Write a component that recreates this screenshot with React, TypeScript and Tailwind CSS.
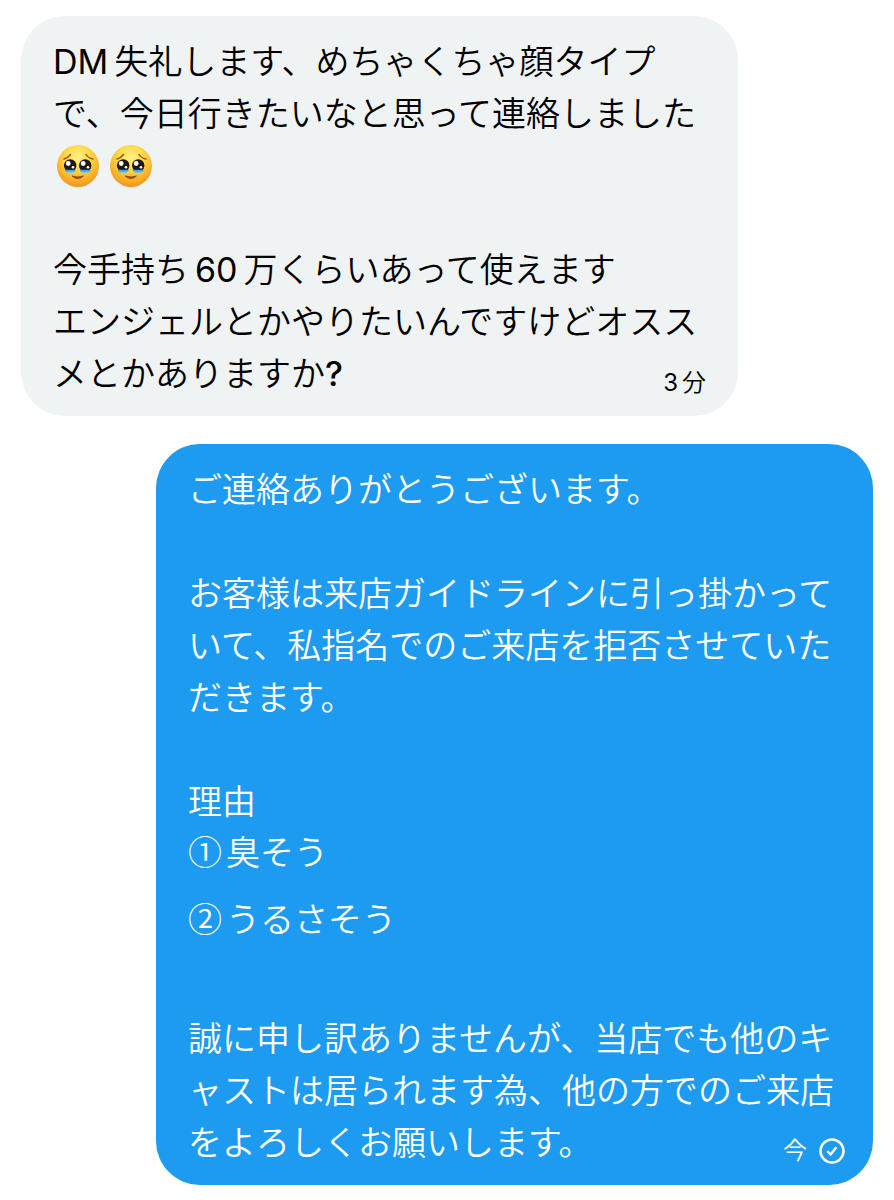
import type { ReactNode } from "react";
import clsx from "clsx";

function TearyFace() {
  return (
    <svg viewBox="0 0 42 42" className="size-[42px]" role="img" aria-label="🥹">
      <defs>
        <radialGradient id="face" cx="50%" cy="30%" r="70%">
          <stop offset="0" stopColor="#fff08a" />
          <stop offset="0.4" stopColor="#fedc4c" />
          <stop offset="0.78" stopColor="#fcae25" />
          <stop offset="1" stopColor="#ec9526" />
        </radialGradient>
        <linearGradient id="tear" x1="0" y1="0" x2="0" y2="1">
          <stop offset="0" stopColor="#2d8fd0" />
          <stop offset="1" stopColor="#74d4fb" />
        </linearGradient>
      </defs>
      <circle cx="21" cy="21" r="21" fill="url(#face)" />
      <g fill="none" stroke="#9a5a14" strokeWidth="1.5" strokeLinecap="round">
        <path d="M7 14Q11 13 13.500 9.500" />
        <path d="M36 14Q31 13 29 9.500" />
      </g>
      <circle cx="13.200" cy="20.500" r="6.200" fill="#201717" />
      <circle cx="28.200" cy="20.500" r="6.200" fill="#201717" />
      <path d="M7.500 24.500Q13 25 19 24.500Q18 28 13.200 28Q8.500 28 7.500 24.500Z" fill="url(#tear)" />
      <path d="M22.500 24.500Q28.500 25 34 24.500Q33 28 28.200 28Q23.500 28 22.500 24.500Z" fill="url(#tear)" />
      <circle cx="11.200" cy="18.500" r="2.400" fill="#fff" />
      <circle cx="26.200" cy="18.500" r="2.400" fill="#fff" />
      <circle cx="16" cy="22.200" r="1.300" fill="#fff" />
      <circle cx="31" cy="22.200" r="1.300" fill="#fff" />
      <path d="M15 31Q21 36 26.500 31Q21 33 15 31Z" fill="#9a4f14" stroke="#9a4f14" strokeLinejoin="round" />
    </svg>
  );
}

function SentIcon() {
  return (
    <svg viewBox="0 0 26 26" className="size-[26px]" fill="none" stroke="currentColor" strokeWidth="2.5" role="img" aria-label="送信済み">
      <circle cx="13" cy="13" r="11.500" />
      <path d="M8.300 13.200L11.600 16.500L17.400 9.200" />
    </svg>
  );
}

interface BubbleProps {
  mine?: boolean;
  time: ReactNode;
  children: ReactNode;
}

function Bubble({ mine, time, children }: BubbleProps) {
  return (
    <article
      className={clsx(
        "relative rounded-[44px] px-8 pt-5 pb-4 [line-break:loose]",
        mine ? "ml-[135px] bg-[#1d9bf0] text-white" : "mr-[135px] bg-[#eff3f4] text-black"
      )}
    >
      {children}
      <footer
        className={clsx(
          "absolute bottom-[21px] flex items-center text-2xl leading-6",
          mine ? "right-7 gap-3" : "right-8"
        )}
      >
        {time}
      </footer>
    </article>
  );
}

export default function App() {
  return (
    <main
      lang="ja"
      className="flex flex-col gap-7 bg-white px-[21px] py-4 font-['Inter','Noto_Sans_CJK_JP',sans-serif] text-[34px] leading-[52px] font-[350]"
    >
      <Bubble
        time={
          <time>
            <span className="mr-1 font-normal">3</span>分
          </time>
        }
      >
        <p>
          <span className="mr-1.5 font-normal">DM</span>
          失礼します、めちゃくちゃ顔タイプで、今日行きたいなと思って連絡しました
        </p>
        <div className="flex h-[52px] items-center gap-[11px] px-1">
          <TearyFace />
          <TearyFace />
        </div>
        <p className="mt-[52px]">
          今手持ち<span className="mx-1.5 font-normal">60</span>万くらいあって使えます
        </p>
        <p>
          エンジェルとかやりたいんですけどオススメとかありますか<span className="font-medium">?</span>
        </p>
      </Bubble>

      <Bubble
        mine
        time={
          <>
            <time>今</time>
            <SentIcon />
          </>
        }
      >
        <p>ご連絡ありがとうございます。</p>
        <p className="mt-[52px]">
          お客様は来店ガイドラインに引っ掛かっていて、私指名でのご来店を拒否させていただきます。
        </p>
        <p className="mt-[52px]">理由</p>
        {/* The CJK face goes first here so the circled numbers stay one em wide */}
        <ul className="-mt-[3px] flex flex-col gap-[15px] font-['Noto_Sans_CJK_JP',sans-serif]">
          <li>
            <span className="mr-1">①</span>臭そう
          </li>
          <li>
            <span className="mr-1">②</span>うるさそう
          </li>
        </ul>
        <p className="mt-[69px]">
          誠に申し訳ありませんが、当店でも他のキャストは居られます為、他の方でのご来店をよろしくお願いします。
        </p>
      </Bubble>
    </main>
  );
}
